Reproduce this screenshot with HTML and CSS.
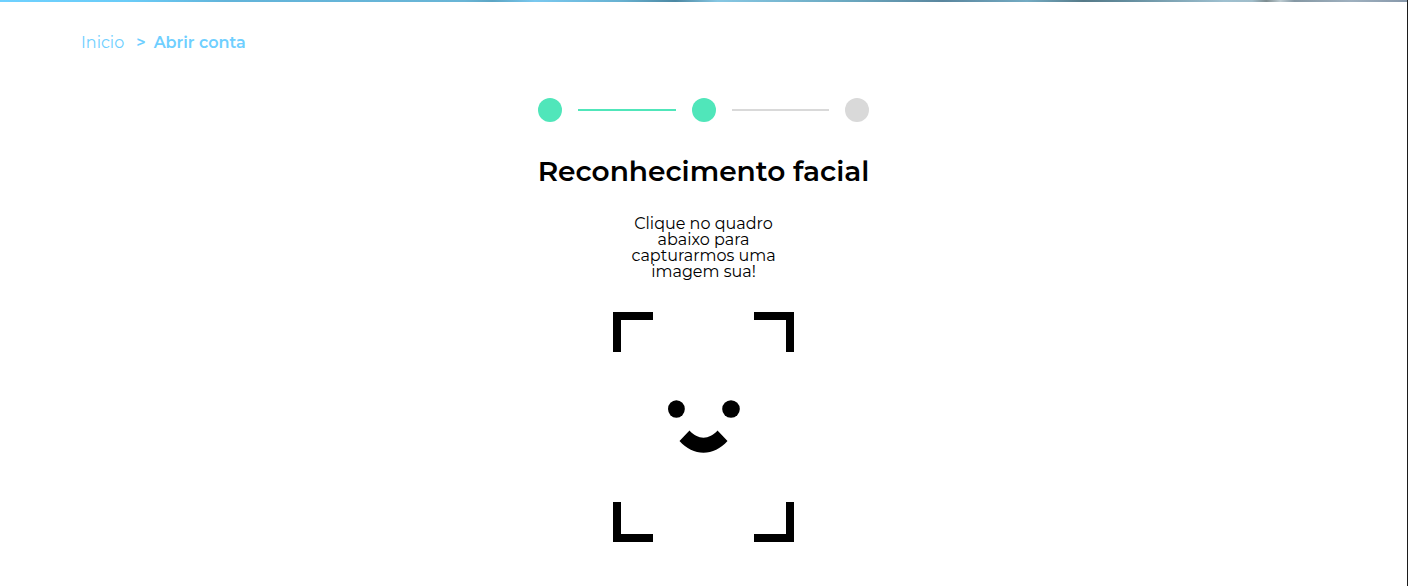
FILE: index.html
```html
<!DOCTYPE html>
<html lang="pt-BR">
<head>
<meta charset="utf-8">
<meta name="viewport" content="width=device-width, initial-scale=1">
<title>Abrir conta</title>
<link rel="stylesheet" href="styles.css">
</head>
<body class="page">
<header class="banner"></header>
<nav class="breadcrumb" aria-label="Navegação">
  <a class="crumb-link" href="#">Inicio</a>
  <span class="crumb-current">&gt;</span>
  <a class="crumb-link crumb-current" href="#" aria-current="page">Abrir conta</a>
</nav>
<main class="content">
  <div class="heading">
    <div class="steps">
      <span class="dot dot-done"></span>
      <span class="line line-done"></span>
      <span class="dot dot-done"></span>
      <span class="line"></span>
      <span class="dot"></span>
    </div>
    <h1 class="title">Reconhecimento facial</h1>
  </div>
  <p class="hint">Clique no quadro abaixo para capturarmos uma imagem sua!</p>
  <button class="capture" type="button" aria-label="Capturar imagem">
    <svg class="face" width="181" height="230" viewBox="0 0 181 230" aria-hidden="true">
      <path d="M0 0h40v8H8v32H0zM141 0h40v40h-8V8h-32zM0 190h8v32h32v8H0zM173 190h8v40h-40v-8h32z"/>
      <ellipse cx="63.4" cy="97" rx="8.4" ry="8.8"/>
      <ellipse cx="118" cy="97" rx="8.8" ry="8.8"/>
      <path d="M66.500 129 76.500 118.500C84.500 128 96.500 128 104.500 118.500L114.500 129C101 144.500 80 144.500 66.500 129z"/>
    </svg>
  </button>
</main>
</body>
</html>
```
FILE: styles.css
```css
* {
  box-sizing: border-box;
}

.page {
  margin: 0;
  min-height: 100vh;
  border-right: 1px solid #1c1c1c;
  background: #fff;
  color: #000;
  font-family: Montserrat, Inter, sans-serif;
  font-size: 16px;
  line-height: 16px;
}

.banner {
  height: 2px;
  background: linear-gradient(90deg, #6fd1ff 0%, #6accf8 9%, #62b4da 16%, #69b5d6 33%, #5ca5c4 35%, #79c8ef 38%, #68b2d2 44%, #4c88a3 48%, #86c7e3 51%, #6ba9c1 60%, #5a869e 67%, #73abc3 73%, #567a88 77%, #628c9d 80%, #9ec0d0 87%, #a0bdca 89%, #7d8c90 90%, #bccbd1 91%, #8598a4 92%, #9eb0bf 96%, #8798aa 100%);
}

.breadcrumb {
  display: flex;
  gap: 8px;
  padding: 33px 81px 0;
  color: #6fcfff;
}

.crumb-link {
  color: inherit;
  font-weight: 400;
  text-decoration: none;
}

.crumb-link:first-child {
  margin-right: 4px;
}

.crumb-link.crumb-current,
.crumb-current {
  font-weight: 600;
}

.content {
  display: flex;
  flex-direction: column;
  align-items: center;
  padding: 47px 16px 43px;
}

.heading {
  display: flex;
  flex-direction: column;
  gap: 29px;
}

.steps {
  display: flex;
  align-items: center;
  gap: 16px;
}

.dot {
  width: 24px;
  height: 24px;
  border-radius: 50%;
  background: #d9d9d9;
}

.line {
  flex: 1;
  height: 2px;
  background: #d9d9d9;
}

.dot-done,
.line-done {
  background: #50e6ba;
}

.title {
  margin: 0;
  font-size: 28px;
  font-weight: 600;
  line-height: 40px;
}

.hint {
  width: 160px;
  margin: 25px 0 32px;
  font-weight: 400;
  text-align: center;
}

.capture {
  padding: 0;
  border: 0;
  background: none;
  cursor: pointer;
}

.face {
  display: block;
}
```
